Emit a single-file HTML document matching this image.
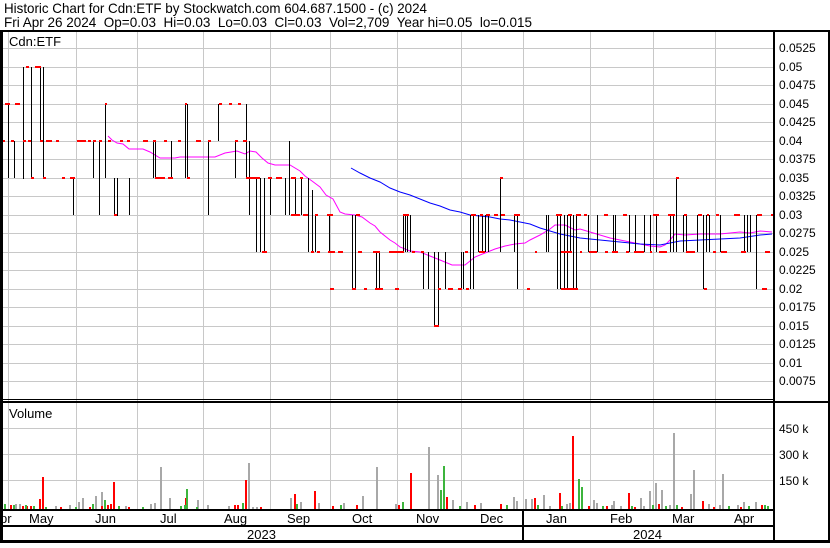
<!DOCTYPE html>
<html><head><meta charset="utf-8"><style>
html,body{margin:0;padding:0;background:#fff;}
body{width:830px;height:543px;overflow:hidden;font-family:"Liberation Sans",Arial,sans-serif;}
svg text{font-family:"Liberation Sans",Arial,sans-serif;white-space:pre;}
</style></head><body>
<svg width="830" height="543" viewBox="0 0 830 543" xmlns="http://www.w3.org/2000/svg" shape-rendering="crispEdges">
<rect width="830" height="543" fill="#fff"/>
<text x="4" y="13" font-size="14" fill="#000" textLength="423" lengthAdjust="spacingAndGlyphs">Historic Chart for Cdn:ETF by Stockwatch.com 604.687.1500 - (c) 2024</text>
<text x="4" y="27" font-size="14" fill="#000" xml:space="preserve" textLength="528" lengthAdjust="spacingAndGlyphs">Fri Apr 26 2024  Op=0.03  Hi=0.03  Lo=0.03  Cl=0.03  Vol=2,709  Year hi=0.05  lo=0.015</text>
<!-- grid price -->
<g stroke="#c8c8c8" stroke-width="1">
<line x1="3" y1="48.5" x2="773" y2="48.5"/><line x1="3" y1="67.5" x2="773" y2="67.5"/><line x1="3" y1="85.5" x2="773" y2="85.5"/><line x1="3" y1="104.5" x2="773" y2="104.5"/><line x1="3" y1="122.5" x2="773" y2="122.5"/><line x1="3" y1="141.5" x2="773" y2="141.5"/><line x1="3" y1="159.5" x2="773" y2="159.5"/><line x1="3" y1="178.5" x2="773" y2="178.5"/><line x1="3" y1="196.5" x2="773" y2="196.5"/><line x1="3" y1="215.5" x2="773" y2="215.5"/><line x1="3" y1="233.5" x2="773" y2="233.5"/><line x1="3" y1="252.5" x2="773" y2="252.5"/><line x1="3" y1="270.5" x2="773" y2="270.5"/><line x1="3" y1="289.5" x2="773" y2="289.5"/><line x1="3" y1="307.5" x2="773" y2="307.5"/><line x1="3" y1="326.5" x2="773" y2="326.5"/><line x1="3" y1="344.5" x2="773" y2="344.5"/><line x1="3" y1="363.5" x2="773" y2="363.5"/><line x1="3" y1="381.5" x2="773" y2="381.5"/>
<line x1="3" y1="428.5" x2="773" y2="428.5"/><line x1="3" y1="454.5" x2="773" y2="454.5"/><line x1="3" y1="480.5" x2="773" y2="480.5"/>
<g>
<line x1="8.5" y1="32" x2="8.5" y2="509"/><line x1="76.5" y1="32" x2="76.5" y2="509"/><line x1="137.5" y1="32" x2="137.5" y2="509"/><line x1="203.5" y1="32" x2="203.5" y2="509"/><line x1="270.5" y1="32" x2="270.5" y2="509"/><line x1="330.5" y1="32" x2="330.5" y2="509"/><line x1="397.5" y1="32" x2="397.5" y2="509"/><line x1="461.5" y1="32" x2="461.5" y2="509"/><line x1="523.5" y1="32" x2="523.5" y2="509"/><line x1="590.5" y1="32" x2="590.5" y2="509"/><line x1="653.5" y1="32" x2="653.5" y2="509"/><line x1="715.5" y1="32" x2="715.5" y2="509"/>
</g></g>
<text x="9" y="46" font-size="13">Cdn:ETF</text>
<text x="9" y="418" font-size="13">Volume</text>
<!-- MAs -->
<polyline fill="none" stroke="#ff00ff" stroke-width="1" shape-rendering="auto" points="108,136 112,140 117,143 123,144 129,149 143,149 150,152 160,158 175,158 180,157 195,157 215,157 225,153 237,151 245,154 250,151 256,152 262,158 268,163 275,165 290,165 300,171 305,176 312,181 320,187 326,195 333,199 340,212 345,214 355,215 362,217 370,223 375,226 380,232 390,240 395,243 400,247 410,251 420,252 430,256 440,260 452,265 465,265 475,257 485,253 495,249 505,246 515,244 525,243 530,240 540,235 550,229 555,225 565,225 575,230 580,229 590,232 600,235 610,238 620,240 630,242 640,244 650,246 660,247 665,245 670,240 675,234 685,235 700,234 720,234 740,232 750,233 760,231 772,232"/>
<polyline fill="none" stroke="#0000ff" stroke-width="1" shape-rendering="auto" points="351,168 360,173 370,178 380,182 390,188 400,192 410,195 420,199 430,203 440,206 450,210 460,212 470,215 480,216 490,217 500,219 510,220 520,222 530,224 540,228 550,231 560,234 570,236 580,238 600,240 620,242 640,244 660,245 680,241 700,240 720,239 740,238 760,235 772,234"/>
<!-- price bars -->
<g stroke="#000" stroke-width="1" transform="translate(0.5,0)">
<line x1="8" y1="104" x2="8" y2="178"/><line x1="14" y1="141" x2="14" y2="178"/><line x1="23" y1="67" x2="23" y2="179"/><line x1="31" y1="67" x2="31" y2="179"/><line x1="40" y1="67" x2="40" y2="141"/><line x1="43" y1="67" x2="43" y2="179"/>
<line x1="73" y1="178" x2="73" y2="215"/><line x1="93" y1="141" x2="93" y2="178"/><line x1="99" y1="141" x2="99" y2="215"/><line x1="105" y1="104" x2="105" y2="178"/><line x1="114" y1="178" x2="114" y2="215"/><line x1="117" y1="178" x2="117" y2="216"/><line x1="129" y1="178" x2="129" y2="215"/>
<line x1="153" y1="141" x2="153" y2="178"/><line x1="155" y1="141" x2="155" y2="178"/><line x1="171" y1="141" x2="171" y2="178"/><line x1="185" y1="104" x2="185" y2="178"/><line x1="187" y1="104" x2="187" y2="178"/>
<line x1="208" y1="141" x2="208" y2="215"/><line x1="218" y1="104" x2="218" y2="141"/><line x1="235" y1="141" x2="235" y2="178"/><line x1="246" y1="104" x2="246" y2="178"/><line x1="249" y1="141" x2="249" y2="215"/><line x1="256" y1="178" x2="256" y2="252"/><line x1="260" y1="178" x2="260" y2="252"/><line x1="264" y1="178" x2="264" y2="252"/><line x1="270" y1="178" x2="270" y2="215"/><line x1="285" y1="178" x2="285" y2="215"/><line x1="289" y1="141" x2="289" y2="215"/><line x1="295" y1="178" x2="295" y2="215"/><line x1="301" y1="178" x2="301" y2="215"/><line x1="308" y1="178" x2="308" y2="252"/><line x1="312" y1="190" x2="312" y2="252"/><line x1="315" y1="215" x2="315" y2="252"/><line x1="329" y1="215" x2="329" y2="252"/>
<line x1="352" y1="215" x2="352" y2="289"/><line x1="355" y1="215" x2="355" y2="289"/><line x1="376" y1="252" x2="376" y2="289"/><line x1="379" y1="252" x2="379" y2="289"/><line x1="403" y1="215" x2="403" y2="252"/><line x1="405" y1="215" x2="405" y2="252"/><line x1="407" y1="215" x2="407" y2="252"/><line x1="410" y1="215" x2="410" y2="252"/><line x1="423" y1="252" x2="423" y2="289"/><line x1="428" y1="252" x2="428" y2="289"/><line x1="434" y1="252" x2="434" y2="326"/><line x1="438" y1="252" x2="438" y2="326"/><line x1="445" y1="252" x2="445" y2="289"/><line x1="461" y1="252" x2="461" y2="289"/><line x1="463" y1="252" x2="463" y2="289"/><line x1="470" y1="215" x2="470" y2="289"/><line x1="473" y1="215" x2="473" y2="289"/><line x1="478" y1="215" x2="478" y2="252"/><line x1="482" y1="215" x2="482" y2="252"/><line x1="485" y1="215" x2="485" y2="252"/><line x1="488" y1="215" x2="488" y2="252"/><line x1="500" y1="178" x2="500" y2="252"/><line x1="514" y1="215" x2="514" y2="252"/><line x1="517" y1="215" x2="517" y2="289"/><line x1="546" y1="215" x2="546" y2="252"/><line x1="548" y1="215" x2="548" y2="252"/><line x1="557" y1="215" x2="557" y2="289"/><line x1="560" y1="215" x2="560" y2="289"/><line x1="564" y1="215" x2="564" y2="289"/><line x1="567" y1="215" x2="567" y2="289"/><line x1="570" y1="215" x2="570" y2="252"/><line x1="573" y1="215" x2="573" y2="289"/><line x1="576" y1="215" x2="576" y2="289"/><line x1="588" y1="215" x2="588" y2="252"/><line x1="597" y1="215" x2="597" y2="252"/><line x1="613" y1="215" x2="613" y2="252"/><line x1="615" y1="215" x2="615" y2="252"/><line x1="629" y1="215" x2="629" y2="252"/><line x1="635" y1="215" x2="635" y2="252"/><line x1="644" y1="215" x2="644" y2="252"/><line x1="650" y1="215" x2="650" y2="252"/><line x1="656" y1="215" x2="656" y2="252"/><line x1="670" y1="215" x2="670" y2="252"/><line x1="673" y1="215" x2="673" y2="252"/><line x1="676" y1="178" x2="676" y2="252"/><line x1="683" y1="215" x2="683" y2="252"/><line x1="686" y1="215" x2="686" y2="252"/><line x1="697" y1="215" x2="697" y2="252"/><line x1="703" y1="215" x2="703" y2="289"/><line x1="706" y1="215" x2="706" y2="252"/><line x1="709" y1="215" x2="709" y2="252"/><line x1="720" y1="215" x2="720" y2="252"/><line x1="744" y1="215" x2="744" y2="252"/><line x1="747" y1="215" x2="747" y2="252"/><line x1="750" y1="215" x2="750" y2="252"/><line x1="756" y1="215" x2="756" y2="289"/>
</g>
<!-- red ticks -->
<g fill="#ff0000">
<rect x="5" y="103" width="5" height="2"/><rect x="15" y="103" width="5" height="2"/><rect x="26" y="66" width="3" height="2"/><rect x="35" y="66" width="6" height="2"/>
<rect x="2" y="140" width="3" height="2"/><rect x="11" y="140" width="3" height="2"/><rect x="23" y="140" width="3" height="2"/><rect x="28" y="140" width="3" height="2"/><rect x="40" y="140" width="3" height="2"/><rect x="46" y="140" width="6" height="2"/><rect x="56" y="140" width="3" height="2"/>
<rect x="31" y="177" width="3" height="2"/><rect x="43" y="177" width="3" height="2"/><rect x="62" y="177" width="3" height="2"/><rect x="70" y="177" width="5" height="2"/>
<rect x="77" y="140" width="9" height="2"/><rect x="88" y="140" width="3" height="2"/><rect x="93" y="140" width="3" height="2"/><rect x="99" y="140" width="3" height="2"/><rect x="108" y="140" width="3" height="2"/><rect x="120" y="140" width="3" height="2"/><rect x="127" y="140" width="3" height="2"/><rect x="105" y="103" width="2" height="2"/>
<rect x="143" y="140" width="5" height="2"/><rect x="153" y="140" width="3" height="2"/><rect x="164" y="140" width="3" height="2"/><rect x="178" y="140" width="3" height="2"/><rect x="185" y="103" width="2" height="2"/><rect x="196" y="140" width="5" height="2"/><rect x="208" y="140" width="3" height="2"/><rect x="219" y="103" width="3" height="2"/><rect x="229" y="103" width="3" height="2"/><rect x="238" y="103" width="3" height="2"/><rect x="235" y="140" width="3" height="2"/><rect x="243" y="140" width="4" height="2"/>
<rect x="155" y="177" width="10" height="2"/><rect x="168" y="177" width="5" height="2"/><rect x="187" y="177" width="3" height="2"/><rect x="114" y="214" width="3" height="2"/><rect x="246" y="177" width="14" height="2"/><rect x="268" y="177" width="4" height="2"/><rect x="276" y="177" width="6" height="2"/><rect x="291" y="177" width="5" height="2"/><rect x="300" y="177" width="3" height="2"/><rect x="262" y="251" width="5" height="2"/>
<rect x="291" y="214" width="9" height="2"/><rect x="303" y="214" width="5" height="2"/><rect x="315" y="214" width="3" height="2"/><rect x="327" y="214" width="6" height="2"/><rect x="311" y="251" width="3" height="2"/><rect x="317" y="251" width="3" height="2"/><rect x="328" y="251" width="7" height="2"/>
<rect x="338" y="251" width="5" height="2"/><rect x="358" y="251" width="4" height="2"/><rect x="373" y="251" width="7" height="2"/><rect x="389" y="251" width="15" height="2"/><rect x="412" y="251" width="3" height="2"/><rect x="421" y="251" width="3" height="2"/><rect x="465" y="251" width="3" height="2"/><rect x="479" y="251" width="6" height="2"/><rect x="535" y="251" width="2" height="2"/><rect x="561" y="251" width="11" height="2"/><rect x="580" y="251" width="2" height="2"/><rect x="589" y="251" width="8" height="2"/><rect x="605" y="251" width="3" height="2"/><rect x="612" y="251" width="6" height="2"/><rect x="626" y="251" width="3" height="2"/><rect x="634" y="251" width="10" height="2"/><rect x="650" y="251" width="2" height="2"/><rect x="659" y="251" width="8" height="2"/><rect x="686" y="251" width="9" height="2"/><rect x="713" y="251" width="3" height="2"/><rect x="721" y="251" width="6" height="2"/><rect x="741" y="251" width="5" height="2"/><rect x="765" y="251" width="5" height="2"/>
<rect x="356" y="214" width="4" height="2"/><rect x="403" y="214" width="6" height="2"/><rect x="471" y="214" width="5" height="2"/><rect x="480" y="214" width="3" height="2"/><rect x="486" y="214" width="4" height="2"/><rect x="494" y="214" width="4" height="2"/><rect x="501" y="214" width="4" height="2"/><rect x="514" y="214" width="6" height="2"/><rect x="556" y="214" width="6" height="2"/><rect x="568" y="214" width="4" height="2"/><rect x="576" y="214" width="5" height="2"/><rect x="584" y="214" width="3" height="2"/><rect x="604" y="214" width="4" height="2"/><rect x="623" y="214" width="4" height="2"/><rect x="653" y="214" width="6" height="2"/><rect x="668" y="214" width="7" height="2"/><rect x="684" y="214" width="3" height="2"/><rect x="698" y="214" width="4" height="2"/><rect x="707" y="214" width="2" height="2"/><rect x="716" y="214" width="3" height="2"/><rect x="734" y="214" width="6" height="2"/><rect x="757" y="214" width="5" height="2"/><rect x="771" y="214" width="2" height="2"/><rect x="500" y="177" width="3" height="2"/><rect x="676" y="177" width="3" height="2"/>
<rect x="330" y="288" width="4" height="2"/><rect x="352" y="288" width="4" height="2"/><rect x="364" y="288" width="3" height="2"/><rect x="375" y="288" width="8" height="2"/><rect x="395" y="288" width="4" height="2"/><rect x="434" y="325" width="5" height="2"/><rect x="438" y="288" width="3" height="2"/><rect x="448" y="288" width="5" height="2"/><rect x="458" y="288" width="4" height="2"/><rect x="466" y="288" width="3" height="2"/><rect x="527" y="288" width="3" height="2"/><rect x="561" y="288" width="17" height="2"/><rect x="704" y="288" width="3" height="2"/><rect x="762" y="288" width="5" height="2"/>
</g>
<!-- volume bars -->
<g>
<g fill="#a8a8a8">
<rect x="15" y="504" width="2" height="5"/><rect x="19" y="504" width="2" height="5"/><rect x="55" y="506" width="2" height="3"/><rect x="69" y="505" width="2" height="4"/><rect x="78" y="502" width="2" height="7"/><rect x="82" y="498" width="2" height="11"/><rect x="95" y="496" width="2" height="13"/><rect x="101" y="492" width="2" height="17"/><rect x="125" y="506" width="2" height="3"/><rect x="150" y="504" width="2" height="5"/><rect x="154" y="503" width="2" height="6"/><rect x="160" y="467" width="2" height="42"/><rect x="169" y="498" width="2" height="11"/><rect x="197" y="500" width="2" height="9"/><rect x="207" y="505" width="2" height="4"/><rect x="228" y="506" width="2" height="3"/><rect x="248" y="463" width="2" height="46"/><rect x="252" y="507" width="2" height="2"/><rect x="256" y="507" width="2" height="2"/><rect x="290" y="498" width="2" height="11"/><rect x="300" y="502" width="2" height="7"/><rect x="318" y="503" width="2" height="6"/><rect x="343" y="503" width="2" height="6"/><rect x="362" y="496" width="2" height="13"/><rect x="376" y="467" width="2" height="42"/><rect x="395" y="504" width="2" height="5"/><rect x="428" y="447" width="2" height="62"/><rect x="437" y="475" width="2" height="34"/><rect x="452" y="500" width="2" height="9"/><rect x="466" y="502" width="2" height="7"/><rect x="480" y="503" width="2" height="6"/><rect x="513" y="497" width="2" height="12"/><rect x="516" y="501" width="2" height="8"/><rect x="525" y="499" width="2" height="10"/><rect x="531" y="499" width="2" height="10"/><rect x="543" y="495" width="2" height="14"/><rect x="549" y="506" width="2" height="3"/><rect x="566" y="504" width="2" height="5"/><rect x="569" y="503" width="2" height="6"/><rect x="593" y="500" width="2" height="9"/><rect x="596" y="503" width="2" height="6"/><rect x="611" y="505" width="2" height="4"/><rect x="613" y="501" width="2" height="8"/><rect x="620" y="506" width="2" height="3"/><rect x="640" y="498" width="2" height="11"/><rect x="643" y="506" width="2" height="3"/><rect x="649" y="491" width="2" height="18"/><rect x="655" y="483" width="2" height="26"/><rect x="661" y="490" width="2" height="19"/><rect x="669" y="505" width="2" height="4"/><rect x="673" y="433" width="2" height="76"/><rect x="690" y="494" width="2" height="15"/><rect x="693" y="470" width="2" height="39"/><rect x="708" y="504" width="2" height="5"/><rect x="719" y="505" width="2" height="4"/><rect x="722" y="474" width="2" height="35"/><rect x="737" y="505" width="2" height="4"/><rect x="743" y="502" width="2" height="7"/><rect x="755" y="502" width="2" height="7"/>
</g>
<g fill="#ff0000">
<rect x="10" y="505" width="2" height="4"/><rect x="22" y="506" width="2" height="3"/><rect x="26" y="506" width="2" height="3"/><rect x="30" y="506" width="2" height="3"/><rect x="39" y="499" width="2" height="10"/><rect x="42" y="477" width="2" height="32"/><rect x="60" y="507" width="2" height="2"/><rect x="89" y="507" width="2" height="2"/><rect x="101" y="506" width="2" height="3"/><rect x="107" y="505" width="2" height="4"/><rect x="110" y="504" width="2" height="5"/><rect x="113" y="482" width="2" height="27"/><rect x="128" y="507" width="2" height="2"/><rect x="185" y="498" width="2" height="11"/><rect x="234" y="505" width="2" height="4"/><rect x="237" y="505" width="2" height="4"/><rect x="245" y="480" width="2" height="29"/><rect x="260" y="507" width="2" height="2"/><rect x="294" y="494" width="2" height="15"/><rect x="314" y="491" width="2" height="18"/><rect x="332" y="506" width="2" height="3"/><rect x="356" y="505" width="2" height="4"/><rect x="398" y="505" width="2" height="4"/><rect x="410" y="473" width="2" height="36"/><rect x="446" y="497" width="2" height="12"/><rect x="474" y="505" width="2" height="4"/><rect x="500" y="504" width="2" height="5"/><rect x="534" y="498" width="2" height="11"/><rect x="559" y="493" width="2" height="16"/><rect x="572" y="436" width="2" height="73"/><rect x="588" y="506" width="2" height="3"/><rect x="606" y="506" width="2" height="3"/><rect x="628" y="493" width="2" height="16"/><rect x="634" y="507" width="2" height="2"/><rect x="658" y="504" width="2" height="5"/><rect x="681" y="507" width="2" height="2"/><rect x="702" y="501" width="2" height="8"/><rect x="713" y="507" width="2" height="2"/><rect x="740" y="507" width="2" height="2"/><rect x="761" y="505" width="2" height="4"/>
</g>
<g fill="#3cb43c">
<rect x="4" y="504" width="2" height="5"/><rect x="13" y="505" width="2" height="4"/><rect x="25" y="505" width="2" height="4"/><rect x="33" y="506" width="2" height="3"/><rect x="45" y="507" width="2" height="2"/><rect x="75" y="507" width="2" height="2"/><rect x="92" y="504" width="2" height="5"/><rect x="104" y="500" width="2" height="9"/><rect x="118" y="506" width="2" height="3"/><rect x="142" y="507" width="2" height="2"/><rect x="180" y="506" width="2" height="3"/><rect x="184" y="505" width="2" height="4"/><rect x="186" y="489" width="2" height="20"/><rect x="196" y="507" width="2" height="2"/><rect x="242" y="503" width="2" height="6"/><rect x="296" y="504" width="2" height="5"/><rect x="340" y="505" width="2" height="4"/><rect x="402" y="502" width="2" height="7"/><rect x="440" y="490" width="2" height="19"/><rect x="443" y="466" width="2" height="43"/><rect x="459" y="506" width="2" height="3"/><rect x="506" y="505" width="2" height="4"/><rect x="537" y="505" width="2" height="4"/><rect x="561" y="506" width="2" height="3"/><rect x="578" y="479" width="2" height="30"/><rect x="581" y="487" width="2" height="22"/><rect x="602" y="506" width="2" height="3"/><rect x="631" y="506" width="2" height="3"/><rect x="652" y="505" width="2" height="4"/><rect x="665" y="506" width="2" height="3"/><rect x="676" y="505" width="2" height="4"/><rect x="728" y="506" width="2" height="3"/><rect x="748" y="506" width="2" height="3"/><rect x="764" y="505" width="2" height="4"/><rect x="767" y="506" width="2" height="3"/>
</g>
</g>
<!-- frame -->
<g fill="#000">
<rect x="0" y="30" width="830" height="2"/>
<rect x="0" y="30" width="3" height="513"/>
<rect x="828" y="30" width="2" height="513"/>
<rect x="773" y="30" width="2" height="513"/>
<rect x="0" y="399" width="775" height="1"/>
<rect x="0" y="401" width="830" height="2"/>
<rect x="0" y="509" width="775" height="2"/>
<rect x="0" y="525" width="775" height="2"/>
<rect x="0" y="540" width="830" height="3"/>
<rect x="522" y="509" width="2" height="32"/>
</g>
<!-- right labels -->
<g font-size="12" fill="#000">
<text x="779" y="52">0.0525</text><text x="779" y="71">0.05</text><text x="779" y="89">0.0475</text><text x="779" y="108">0.045</text><text x="779" y="126">0.0425</text><text x="779" y="145">0.04</text><text x="779" y="163">0.0375</text><text x="779" y="182">0.035</text><text x="779" y="200">0.0325</text><text x="779" y="219">0.03</text><text x="779" y="237">0.0275</text><text x="779" y="256">0.025</text><text x="779" y="274">0.0225</text><text x="779" y="293">0.02</text><text x="779" y="311">0.0175</text><text x="779" y="330">0.015</text><text x="779" y="348">0.0125</text><text x="779" y="367">0.01</text><text x="779" y="385">0.0075</text>
<text x="779" y="433">450 k</text><text x="779" y="459">300 k</text><text x="779" y="485">150 k</text>
</g>
<g font-size="13" fill="#000">
<text x="0" y="523">pr</text><text x="29" y="523">May</text><text x="95" y="523">Jun</text><text x="160" y="523">Jul</text><text x="224" y="523">Aug</text><text x="287" y="523">Sep</text><text x="352" y="523">Oct</text><text x="416" y="523">Nov</text><text x="480" y="523">Dec</text><text x="546" y="523">Jan</text><text x="610" y="523">Feb</text><text x="672" y="523">Mar</text><text x="734" y="523">Apr</text>
<text x="247" y="539">2023</text><text x="633" y="539">2024</text>
</g>
</svg>
</body></html>
